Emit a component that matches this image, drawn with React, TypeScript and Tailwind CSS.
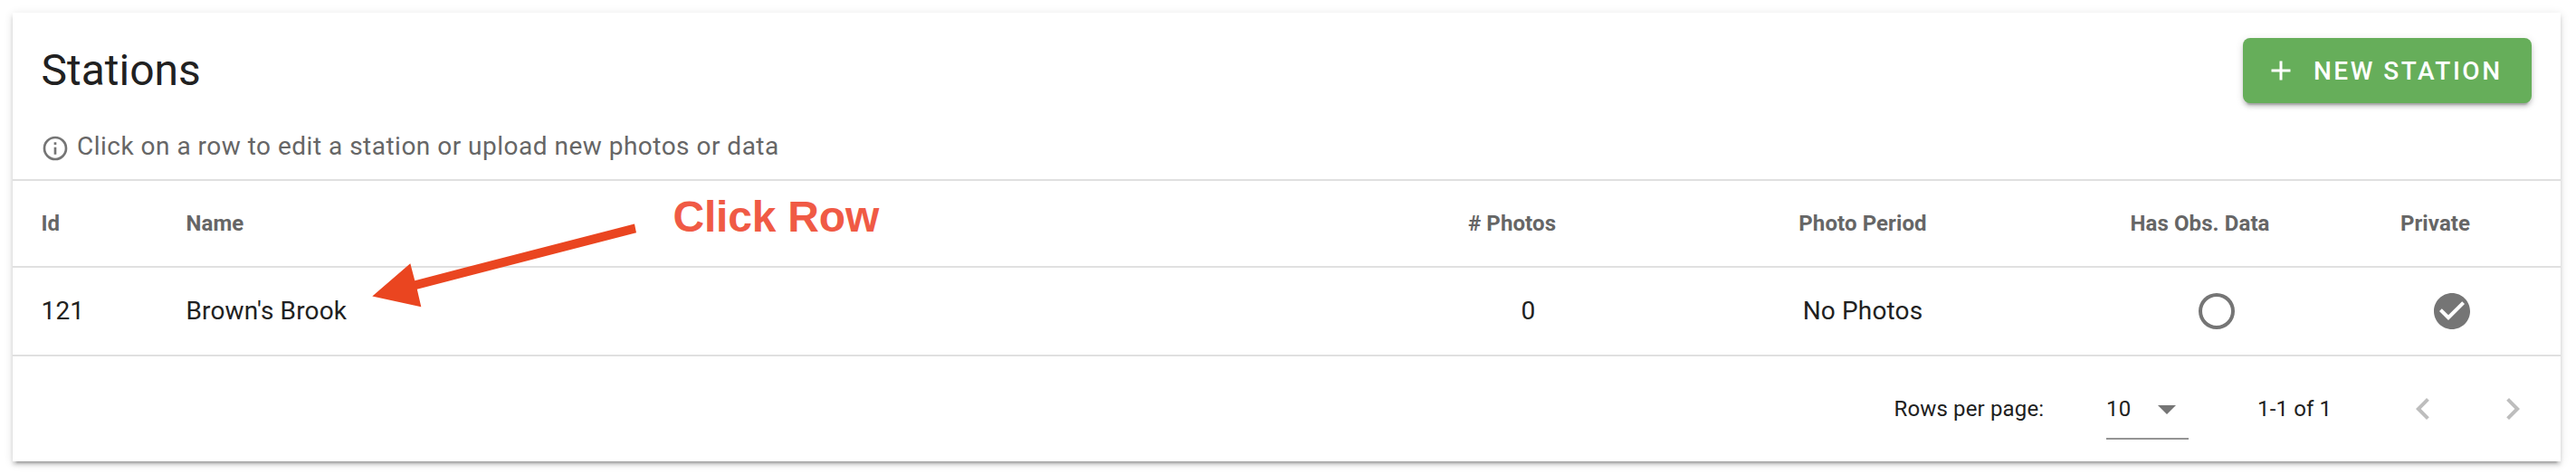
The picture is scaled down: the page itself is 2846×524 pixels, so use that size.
const columns = "grid grid-cols-[160px_1396px_237px_502px_279px_241px] items-center";

function SortHeader({ label }: { label: string }) {
  return <div className="pr-9 text-center">{label}</div>;
}

function Icon({ path, className }: { path: string; className: string }) {
  return (
    <svg viewBox="0 0 24 24" className={className} fill="currentColor" aria-hidden="true">
      <path d={path} />
    </svg>
  );
}

export default function App() {
  return (
    <div className="relative h-[524px] overflow-hidden bg-white pt-[14px] pl-[14px] font-['Roboto',sans-serif] text-[#212121]">
      <main className="flex h-[496px] w-[2815px] flex-col bg-white shadow-[0_6px_2px_-4px_rgba(0,0,0,0.2),0_4px_4px_0_rgba(0,0,0,0.14),0_2px_10px_0_rgba(0,0,0,0.12)]">
        <header className="flex h-[128px] items-center justify-between pr-8 pl-[31.5px]">
          <h1 className="text-[48px] leading-[64px]">Stations</h1>
          <button className="flex h-[72px] w-[319px] items-center rounded-[8px] bg-[#66ae5a] pl-6 text-[28px] font-medium tracking-[2.5px] text-white shadow-[0_6px_2px_-4px_rgba(0,0,0,0.2),0_4px_4px_0_rgba(0,0,0,0.14),0_2px_10px_0_rgba(0,0,0,0.12)]">
            <Icon className="mr-[18px] size-9" path="M19,13H13V19H11V13H5V11H11V5H13V11H19V13Z" />
            <span className="pt-0.5">NEW STATION</span>
          </button>
        </header>
        <p className="flex h-[56px] items-start px-[31px] text-[28px] leading-10 tracking-[0.49px] text-[#666]">
          <Icon
            className="mt-[6px] mr-2 size-8 text-[#757575]"
            path="M11,9H13V7H11M12,20C7.59,20 4,16.41 4,12C4,7.59 7.59,4 12,4C16.41,4 20,7.59 20,12C20,16.41 16.41,20 12,20M12,2A10,10 0 0,0 2,12A10,10 0 0,0 12,22A10,10 0 0,0 22,12A10,10 0 0,0 12,2M11,17H13V11H11V17Z"
          />
          Click on a row to edit a station or upload new photos or data
        </p>
        <div className={`${columns} h-[98px] border-y-2 border-[#e0e0e0] text-[24px] font-bold tracking-[0.1px] text-[#666]`}>
          <div className="pl-[31.5px]">Id</div>
          <div className="pl-[31.5px]">Name</div>
          <SortHeader label="# Photos" />
          <div className="text-center">Photo Period</div>
          <SortHeader label="Has Obs. Data" />
          <SortHeader label="Private" />
        </div>
        <div className={`${columns} h-[98px] border-b-2 border-[#e0e0e0] text-[28px] tracking-[0.15px]`}>
          <div className="pl-[31.5px]">121</div>
          <div className="pl-[31.5px]">Brown's Brook</div>
          <div className="text-center">0</div>
          <div className="text-center">No Photos</div>
          <Icon
            className="size-12 justify-self-center text-[#757575]"
            path="M12,20A8,8 0 0,1 4,12A8,8 0 0,1 12,4A8,8 0 0,1 20,12A8,8 0 0,1 12,20M12,2A10,10 0 0,0 2,12A10,10 0 0,0 12,22A10,10 0 0,0 22,12A10,10 0 0,0 12,2Z"
          />
          <Icon
            className="size-12 justify-self-center text-[#757575]"
            path="M12 2C6.5 2 2 6.5 2 12S6.5 22 12 22 22 17.5 22 12 17.5 2 12 2M10 17L5 12L6.41 10.59L10 14.17L17.59 6.58L19 8L10 17Z"
          />
        </div>
        <footer className="flex h-[116px] items-center text-[24px] tracking-[0.15px]">
          <div className="ml-[2078.5px] w-[234.5px]">Rows per page:</div>
          <div className="mt-[8px] flex h-[60px] w-[91px] items-center justify-between border-b-2 border-[#949494] pb-[6px]">
            10
            <Icon className="size-12 shrink-0 text-[#757575]" path="M7,10L12,15L17,10H7Z" />
          </div>
          <div className="ml-[76px] w-[159px]">1-1 of 1</div>
          <Icon className="size-12 text-[#bdbdbd]" path="M15.41,16.58L10.83,12L15.41,7.41L14,6L8,12L14,18L15.41,16.58Z" />
          <Icon className="ml-[51px] size-12 text-[#bdbdbd]" path="M8.59,16.58L13.17,12L8.59,7.41L10,6L16,12L10,18L8.59,16.58Z" />
        </footer>
      </main>
      <svg className="absolute top-[240px] left-[400px] h-[110px] w-[320px]" viewBox="400 240 320 110" fill="#ea4520" aria-hidden="true">
        <path d="M411.3 327.5L453.3 291.2L458.3 310.2L701 247.5L703 257.3L460.8 319.8L465.3 339.2Z" />
      </svg>
      <div className="absolute top-[212px] left-[743.5px] font-['Liberation_Sans',sans-serif] text-[48px] leading-[56px] font-bold tracking-[-0.2px] whitespace-nowrap text-[#f05a45]">
        Click Row
      </div>
    </div>
  );
}
